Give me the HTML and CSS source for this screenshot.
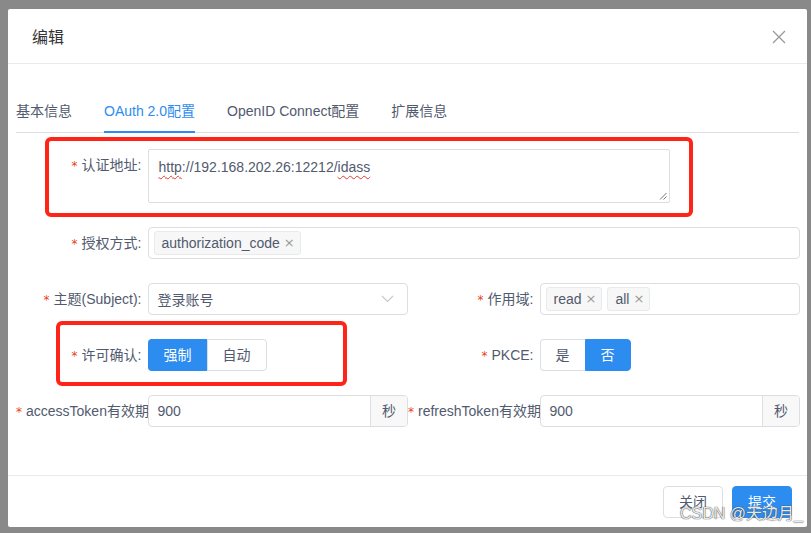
FILE: index.html
```html
<!DOCTYPE html>
<html lang="zh-CN">
<head>
<meta charset="utf-8">
<title>编辑</title>
<link rel="stylesheet" href="styles.css">
</head>
<body>
<div class="modal">
  <div class="modal-header">
    <div class="modal-title">编辑</div>
    <svg class="close" width="14" height="14" viewBox="0 0 14 14"><path d="M1 1L13 13M13 1L1 13" stroke="#999" stroke-width="1.3" fill="none"/></svg>
  </div>
  <div class="modal-body">
    <div class="tabs">
      <div class="tab">基本信息</div>
      <div class="tab active">OAuth 2.0配置</div>
      <div class="tab">OpenID Connect配置</div>
      <div class="tab">扩展信息</div>
    </div>
    <div class="form">
      <div class="row">
        <div class="label"><span class="req">*</span>认证地址:</div>
        <div class="textarea"><span class="spell">http</span>://192.168.202.26:12212/<span class="spell">idass</span>
          <svg class="grip" width="8" height="8" viewBox="0 0 8 8"><path d="M7.5 1L1 7.5M7.5 4.5L4.5 7.5" stroke="#777" stroke-width="1" fill="none"/></svg>
        </div>
      </div>
      <div class="row">
        <div class="label"><span class="req">*</span>授权方式:</div>
        <div class="select multi full">
          <span class="tag">authorization_code<span class="x">×</span></span>
        </div>
      </div>
      <div class="row two">
        <div class="field">
          <div class="label"><span class="req">*</span>主题(Subject):</div>
          <div class="select single">
            <span>登录账号</span>
            <svg width="13" height="8" viewBox="0 0 13 8"><path d="M1 1L6.5 6.5L12 1" stroke="#c5c8ce" stroke-width="1.1" fill="none"/></svg>
          </div>
        </div>
        <div class="field">
          <div class="label"><span class="req">*</span>作用域:</div>
          <div class="select multi">
            <span class="tag">read<span class="x">×</span></span>
            <span class="tag">all<span class="x">×</span></span>
          </div>
        </div>
      </div>
      <div class="row two">
        <div class="field">
          <div class="label"><span class="req">*</span>许可确认:</div>
          <div class="radios">
            <span class="rbtn on">强制</span><span class="rbtn">自动</span>
          </div>
        </div>
        <div class="field">
          <div class="label"><span class="req">*</span>PKCE:</div>
          <div class="radios">
            <span class="rbtn">是</span><span class="rbtn on">否</span>
          </div>
        </div>
      </div>
      <div class="row two">
        <div class="field">
          <div class="label clip"><span class="req">*</span>accessToken有效期</div>
          <div class="group">
            <span class="gin">900</span><span class="append">秒</span>
          </div>
        </div>
        <div class="field">
          <div class="label clip"><span class="req">*</span>refreshToken有效期</div>
          <div class="group">
            <span class="gin">900</span><span class="append">秒</span>
          </div>
        </div>
      </div>
    </div>
  </div>
  <div class="modal-footer">
    <span class="btn">关闭</span>
    <span class="btn primary">提交</span>
  </div>
  <div class="mark mark1"></div>
  <div class="mark mark2"></div>
  <div class="watermark">CSDN @天边月_</div>
</div>
</body>
</html>
```
FILE: styles.css
```css
* { box-sizing: border-box; }
html, body { margin: 0; padding: 0; }
body {
  background: #898989;
  width: 811px;
  height: 533px;
  overflow: hidden;
  padding: 9px 0 0 8px;
  font-family: "Liberation Sans", "Noto Sans CJK SC", sans-serif;
  font-size: 14px;
  color: #515a6e;
}
.modal {
  position: relative;
  width: 799px;
  background: #fff;
  border-radius: 2px;
}
.modal-header {
  height: 55px;
  border-bottom: 1px solid #e8eaec;
  display: flex;
  align-items: center;
  justify-content: space-between;
  padding: 0 21px 0 24px;
}
.modal-title {
  font-size: 16px;
  line-height: 20px;
  margin-top: 3px;
  color: #333;
}
.close { display: block; margin-top: 1px; }
.modal-body {
  padding: 28px 7px 24px 8px;
}
.tabs {
  display: flex;
  border-bottom: 1px solid #dcdee2;
  margin-right: 1px;
}
.tab {
  height: 41px;
  line-height: 39px;
  border-bottom: 2px solid transparent;
  margin-right: 32px;
  margin-bottom: -1px;
  color: #515a6e;
  white-space: nowrap;
}
.tab.active {
  color: #2d8cf0;
  border-bottom-color: #2d8cf0;
}
.form { padding-top: 16px; }
.row {
  display: flex;
  margin-bottom: 24px;
}
.row.two {
  display: grid;
  grid-template-columns: 392px 392px;
}
.field { display: flex; }
.label {
  width: 131.5px;
  height: 32px;
  flex: none;
  text-align: right;
  padding-right: 6px;
  line-height: 32px;
  white-space: nowrap;
  color: #515a6e;
}
.label.clip { overflow: hidden; padding-right: 5px; }
.req {
  color: #ed4014;
  margin-right: 4px;
  font-family: "DejaVu Sans", sans-serif;
  font-size: 12px;
  line-height: 1;
}
.textarea {
  position: relative;
  width: 522px;
  height: 54px;
  border: 1px solid #dcdee2;
  border-radius: 2px;
  padding: 7px 10px;
  line-height: 21px;
  color: #515a6e;
}
.spell {
  text-decoration: underline wavy #e53935;
  text-decoration-thickness: 1px;
  text-underline-offset: 3px;
}
.grip { position: absolute; right: 2px; bottom: 2px; }
.select {
  flex: 1;
  height: 32px;
  border: 1px solid #dcdee2;
  border-radius: 4px;
  display: flex;
  align-items: center;
}
.select.single {
  justify-content: space-between;
  padding: 0 13px 0 9px;
}
.select.single svg { display: block; }
.select.multi {
  padding-left: 5px;
  gap: 5px;
}
.tag {
  height: 24px;
  line-height: 22px;
  border: 1px solid #e8eaec;
  background: #f7f7f7;
  border-radius: 3px;
  padding: 0 5px 0 7px;
  color: #515a6e;
  display: inline-flex;
  align-items: center;
}
.tag .x {
  color: #999;
  font-family: "DejaVu Sans", sans-serif;
  font-size: 13px;
  margin-left: 4px;
}
.radios { display: flex; }
.rbtn {
  height: 32px;
  line-height: 30px;
  padding: 0 15px;
  border: 1px solid #dcdee2;
  color: #515a6e;
  background: #fff;
}
.rbtn:first-child { border-radius: 4px 0 0 4px; border-right: none; }
.rbtn:last-child { border-radius: 0 4px 4px 0; }
.rbtn.on {
  background: #2d8cf0;
  border-color: #2d8cf0;
  color: #fff;
}
.group {
  flex: 1;
  height: 32px;
  border: 1px solid #dcdee2;
  border-radius: 4px;
  display: flex;
  overflow: hidden;
}
.gin {
  flex: 1;
  line-height: 30px;
  padding-left: 9px;
}
.append {
  width: 37px;
  text-align: center;
  line-height: 30px;
  background: #f8f8f9;
  border-left: 1px solid #dcdee2;
}
.modal-footer {
  border-top: 1px solid #e8eaec;
  padding: 10px 15px 9px;
  display: flex;
  justify-content: flex-end;
  gap: 9px;
}
.btn {
  height: 32px;
  line-height: 30px;
  padding: 0 15px;
  border: 1px solid #dcdee2;
  border-radius: 4px;
  color: #515a6e;
  background: #fff;
}
.btn.primary {
  background: #2d8cf0;
  border-color: #2d8cf0;
  color: #fff;
}
.mark {
  position: absolute;
  border: 4px solid #ff2418;
  border-radius: 6px;
}
.mark1 { left: 37px; top: 128px; width: 648px; height: 80px; }
.mark2 { left: 48px; top: 312px; width: 291px; height: 65px; }
.watermark {
  position: absolute;
  left: 672px;
  top: 495px;
  font-size: 16px;
  line-height: 20px;
  color: rgba(255,255,255,0.9);
  text-shadow: 0 0 1px rgba(60,60,60,0.9), 0 0 1px rgba(60,60,60,0.9);
  white-space: nowrap;
}
```
